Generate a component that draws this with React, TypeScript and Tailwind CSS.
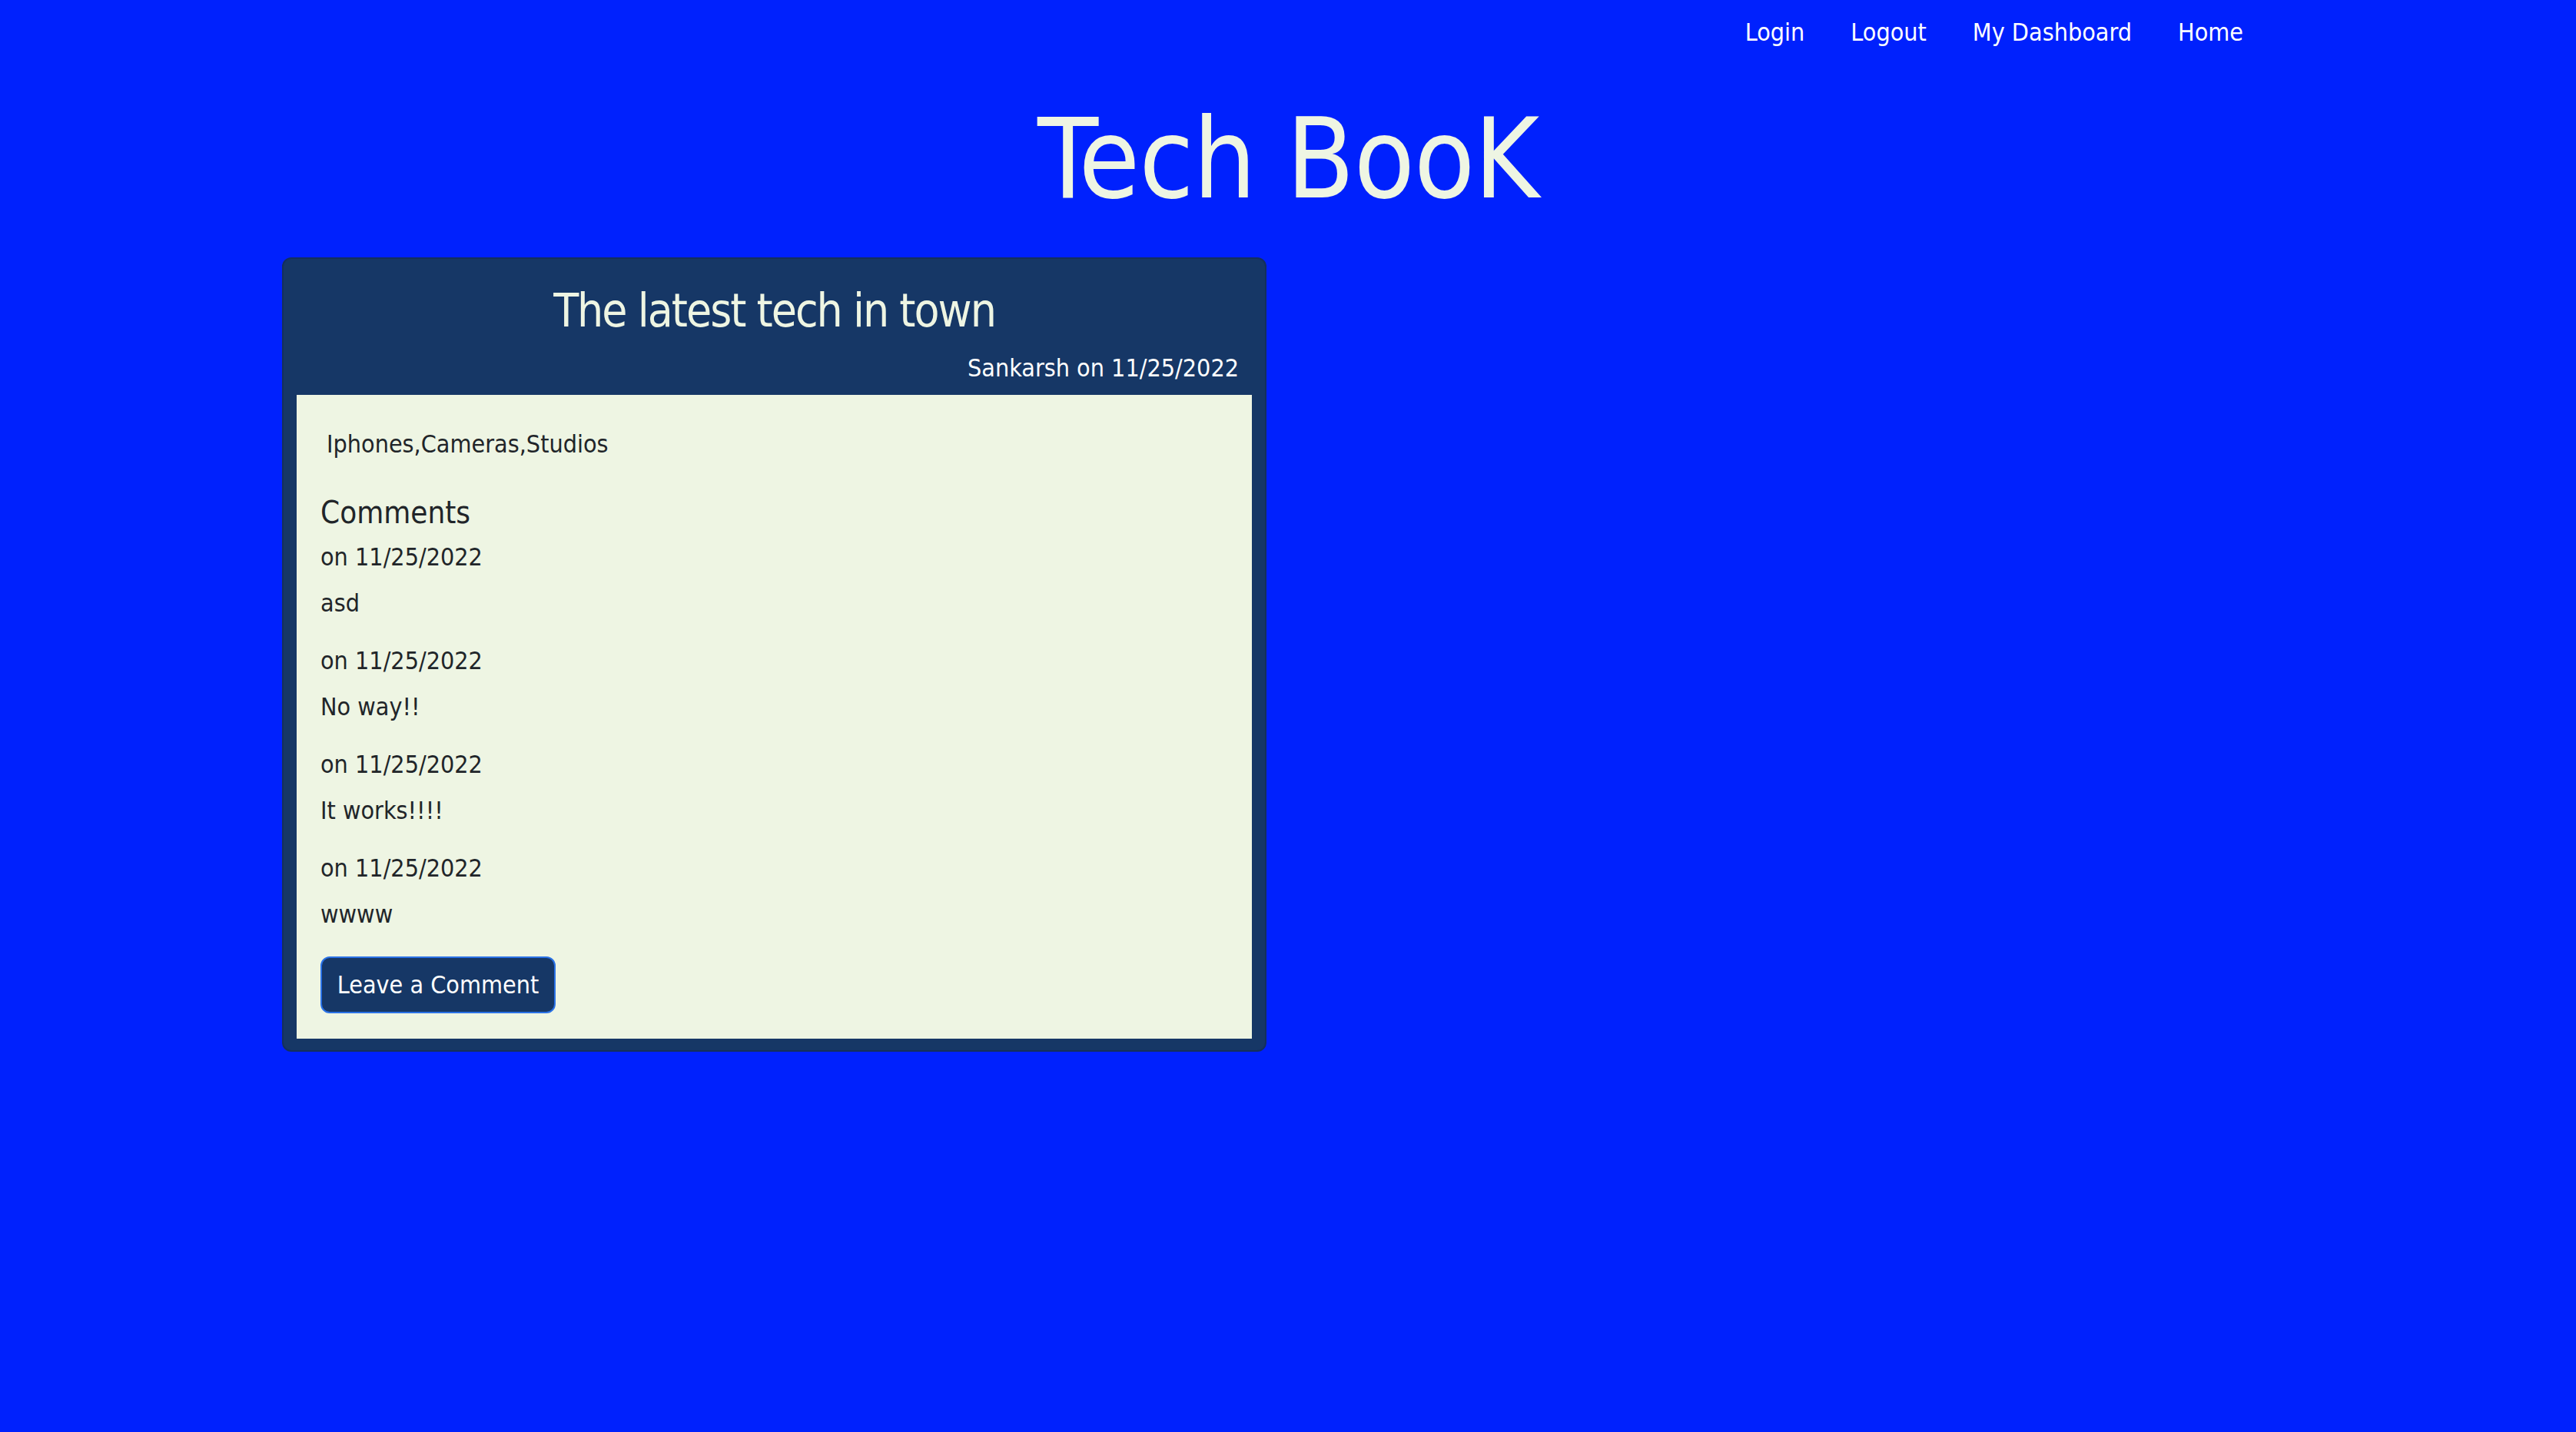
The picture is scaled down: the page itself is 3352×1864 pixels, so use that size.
import React from "react";

const navLinks = ["Login", "Logout", "My Dashboard", "Home"];

const comments = [
  { date: "11/25/2022", text: "asd" },
  { date: "11/25/2022", text: "No way!!" },
  { date: "11/25/2022", text: "It works!!!!" },
  { date: "11/25/2022", text: "wwww" },
];

const font = "font-['DejaVu_Sans_Condensed','DejaVu_Sans',sans-serif]";

const App: React.FC = () => {
  return (
    <div className={`min-h-screen w-full bg-[#0021fd] ${font}`}>
      {/* top nav */}
      <nav className="flex justify-end gap-[60px] pt-[23px] pr-[433px]">
        {navLinks.map((link) => (
          <a key={link} href="#" className="text-[32px] leading-[38px] text-white no-underline">
            {link}
          </a>
        ))}
      </nav>

      <h1 className="mt-[60px] text-center text-[144px] leading-[172px] tracking-[-1px] text-[#eef5e3]">Tech BooK</h1>

      <div className="mt-[42px] ml-[367px] w-[1281px]">
        <div className="rounded-[12px] border-2 border-[#142f5c] bg-[#163766] px-[17px] pt-[31px] pb-[15px]">
          <h2 className="text-center text-[60px] leading-[72px] tracking-[-2px] text-[#eef5e3]">
            The latest tech in town
          </h2>
          <p className="mt-[20px] pr-[17px] text-right text-[32px] leading-[38px] text-white">
            Sankarsh on 11/25/2022
          </p>

          <div className="mt-[16px] bg-[#eef5e3] pt-[45px] pb-[33px] pl-[31px] pr-[31px] text-[#212529]">
            <p className="pl-[8px] text-[32px] leading-[38px]">Iphones,Cameras,Studios</p>

            <h3 className="mt-[46px] text-[40px] leading-[48px]">Comments</h3>

            <div className="mt-[15px]">
              {comments.map((c, i) => (
                <div key={i} className="mb-[37px]">
                  <p className="text-[32px] leading-[38px]">on {c.date}</p>
                  <p className="mt-[22px] text-[32px] leading-[38px]">{c.text}</p>
                </div>
              ))}
            </div>

            <button className="-mt-[1px] h-[74px] w-[306px] rounded-[12px] border-2 border-[#2a72e6] bg-[#163766] text-center text-[32px] leading-[38px] text-white">
              Leave a Comment
            </button>
          </div>
        </div>
      </div>
    </div>
  );
};

export default App;
